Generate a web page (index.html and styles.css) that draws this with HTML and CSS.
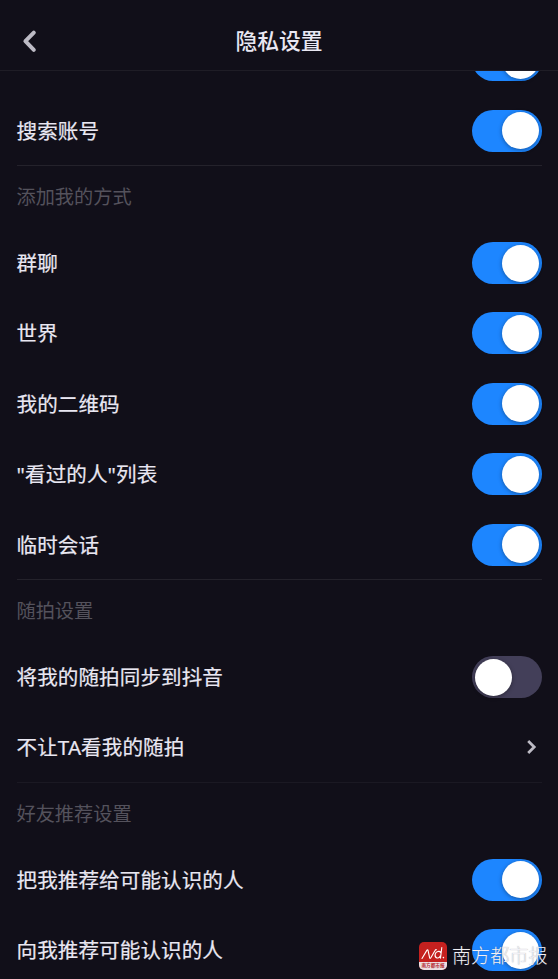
FILE: index.html
```html
<!DOCTYPE html>
<html lang="zh-CN">
<head>
<meta charset="utf-8">
<title>隐私设置</title>
<link rel="stylesheet" href="styles.css">
</head>
<body>
<div class="screen">
  <header class="topbar">
    <svg class="back" viewBox="0 0 20 28" aria-hidden="true"><path d="M13.8 5.6 5.4 14.2l8.4 8.6"/></svg>
    <h1 class="title">隐私设置</h1>
  </header>
  <main class="viewport">
    <div class="list">
      <section class="group">
        <div class="row"><span></span><span class="toggle on"></span></div>
        <div class="row"><span class="label">搜索账号</span><span class="toggle on"></span></div>
      </section>
      <section class="group">
        <h2 class="heading">添加我的方式</h2>
        <div class="row"><span class="label">群聊</span><span class="toggle on"></span></div>
        <div class="row"><span class="label">世界</span><span class="toggle on"></span></div>
        <div class="row"><span class="label">我的二维码</span><span class="toggle on"></span></div>
        <div class="row"><span class="label">"看过的人"列表</span><span class="toggle on"></span></div>
        <div class="row"><span class="label">临时会话</span><span class="toggle on"></span></div>
      </section>
      <section class="group">
        <h2 class="heading">随拍设置</h2>
        <div class="row"><span class="label">将我的随拍同步到抖音</span><span class="toggle"></span></div>
        <div class="row"><span class="label">不让TA看我的随拍</span><svg class="more" viewBox="0 0 12 16" aria-hidden="true"><path d="M2.2 2 8.2 8l-6 6"/></svg></div>
      </section>
      <section class="group faint">
        <h2 class="heading">好友推荐设置</h2>
        <div class="row"><span class="label">把我推荐给可能认识的人</span><span class="toggle on"></span></div>
        <div class="row"><span class="label">向我推荐可能认识的人</span><span class="toggle on"></span></div>
      </section>
    </div>
  </main>
  <div class="watermark">
    <div class="logo">
      <svg class="mark" viewBox="0 0 28 20" aria-hidden="true"><path d="M3 16.5 7.8 8.4q.9-1.4 1.3.2l1.5 7q.5 1.6 1.4 0L16 8.4q.4-.8 1.3-.8M22.8 5.5l-1.3 10.6M21.8 10.6c-1.2-2-4.8-1.4-5.6 1.5-.9 4.3 3.8 5.4 5.2 1.6"/><circle cx="24.4" cy="15.6" r=".8"/></svg>
      <span class="logo-name">南方都市报</span>
    </div>
    <span class="watermark-name">南方都市报</span>
  </div>
</div>
</body>
</html>
```
FILE: styles.css
```css
* { box-sizing: border-box; }

body {
  margin: 0;
  background: #110f19;
  color: #e9e7f2;
  font-family: "Noto Sans", "Noto Sans CJK SC", sans-serif;
}

.screen {
  position: relative;
  display: flex;
  flex-direction: column;
  height: 979px;
  overflow: hidden;
}

.topbar {
  display: grid;
  grid-template-columns: 40px 1fr 40px;
  align-items: center;
  flex: none;
  height: 71px;
  padding: 12px 0 0;
  border-bottom: 1px solid #1f1d26;
}

.back {
  width: 20px;
  height: 28px;
  margin-left: 20px;
  margin-bottom: 1px;
}

.back path,
.more path {
  fill: none;
  stroke: #bdbbc5;
  stroke-linecap: round;
  stroke-linejoin: round;
}

.back path { stroke-width: 4; }

.title {
  margin: 0 0 1px;
  font-size: 21.8px;
  font-weight: 500;
  line-height: 30px;
  text-align: center;
}

.viewport {
  flex: 1;
  min-height: 0;
  overflow: hidden;
}

.list {
  margin-top: -45.9px;
  padding: 0 16.5px;
}

.group + .group {
  margin-top: -.8px;
  border-top: 1px solid #24222b;
}

.group.faint { border-top-color: #1b1923; }

.heading {
  margin: 0;
  height: 61.8px;
  color: #54525c;
  font-size: 19.2px;
  font-weight: 400;
  line-height: 62px;
}

.row {
  display: flex;
  align-items: center;
  justify-content: space-between;
  height: 70.4px;
  font-size: 20.55px;
  line-height: 30px;
}

.label {
  letter-spacing: .1px;
  -webkit-text-stroke: .2px currentColor;
}

.toggle {
  display: flex;
  align-items: center;
  width: 69.5px;
  height: 42px;
  padding: 0 2.5px;
  border-radius: 21px;
  background: #433f59;
}

.toggle::before {
  content: "";
  width: 37px;
  height: 37px;
  border-radius: 50%;
  background: #fff;
  box-shadow: 0 1px 4px rgba(0, 0, 0, .36);
}

.toggle.on {
  justify-content: flex-end;
  background: #1d86ff;
}

.more {
  width: 12px;
  height: 16px;
  margin-right: 3.5px;
}

.more path {
  stroke-width: 2.8;
  stroke-linecap: butt;
  stroke-linejoin: miter;
}

.watermark {
  position: absolute;
  left: 419px;
  top: 942px;
  display: flex;
  align-items: center;
  gap: 5px;
  height: 28px;
}

.logo {
  display: flex;
  flex-direction: column;
  width: 28px;
  height: 28px;
  border-radius: 5px;
  overflow: hidden;
  background: #c5211f;
}

.mark {
  width: 28px;
  height: 20px;
}

.mark path {
  fill: none;
  stroke: #fff;
  stroke-width: 1.1;
  stroke-linecap: round;
}

.mark circle { fill: #fff; }

.logo-name {
  height: 8px;
  background: #eadfe2;
  color: #b52b31;
  font-size: 4.6px;
  font-weight: 700;
  line-height: 7px;
  text-align: center;
  white-space: nowrap;
}

.watermark-name {
  padding-bottom: 1px;
  color: #f1f0f5;
  font-size: 19.1px;
  font-weight: 300;
  line-height: 28px;
  white-space: nowrap;
  text-shadow: 0 0 1px rgba(90, 90, 100, .6);
}
```
